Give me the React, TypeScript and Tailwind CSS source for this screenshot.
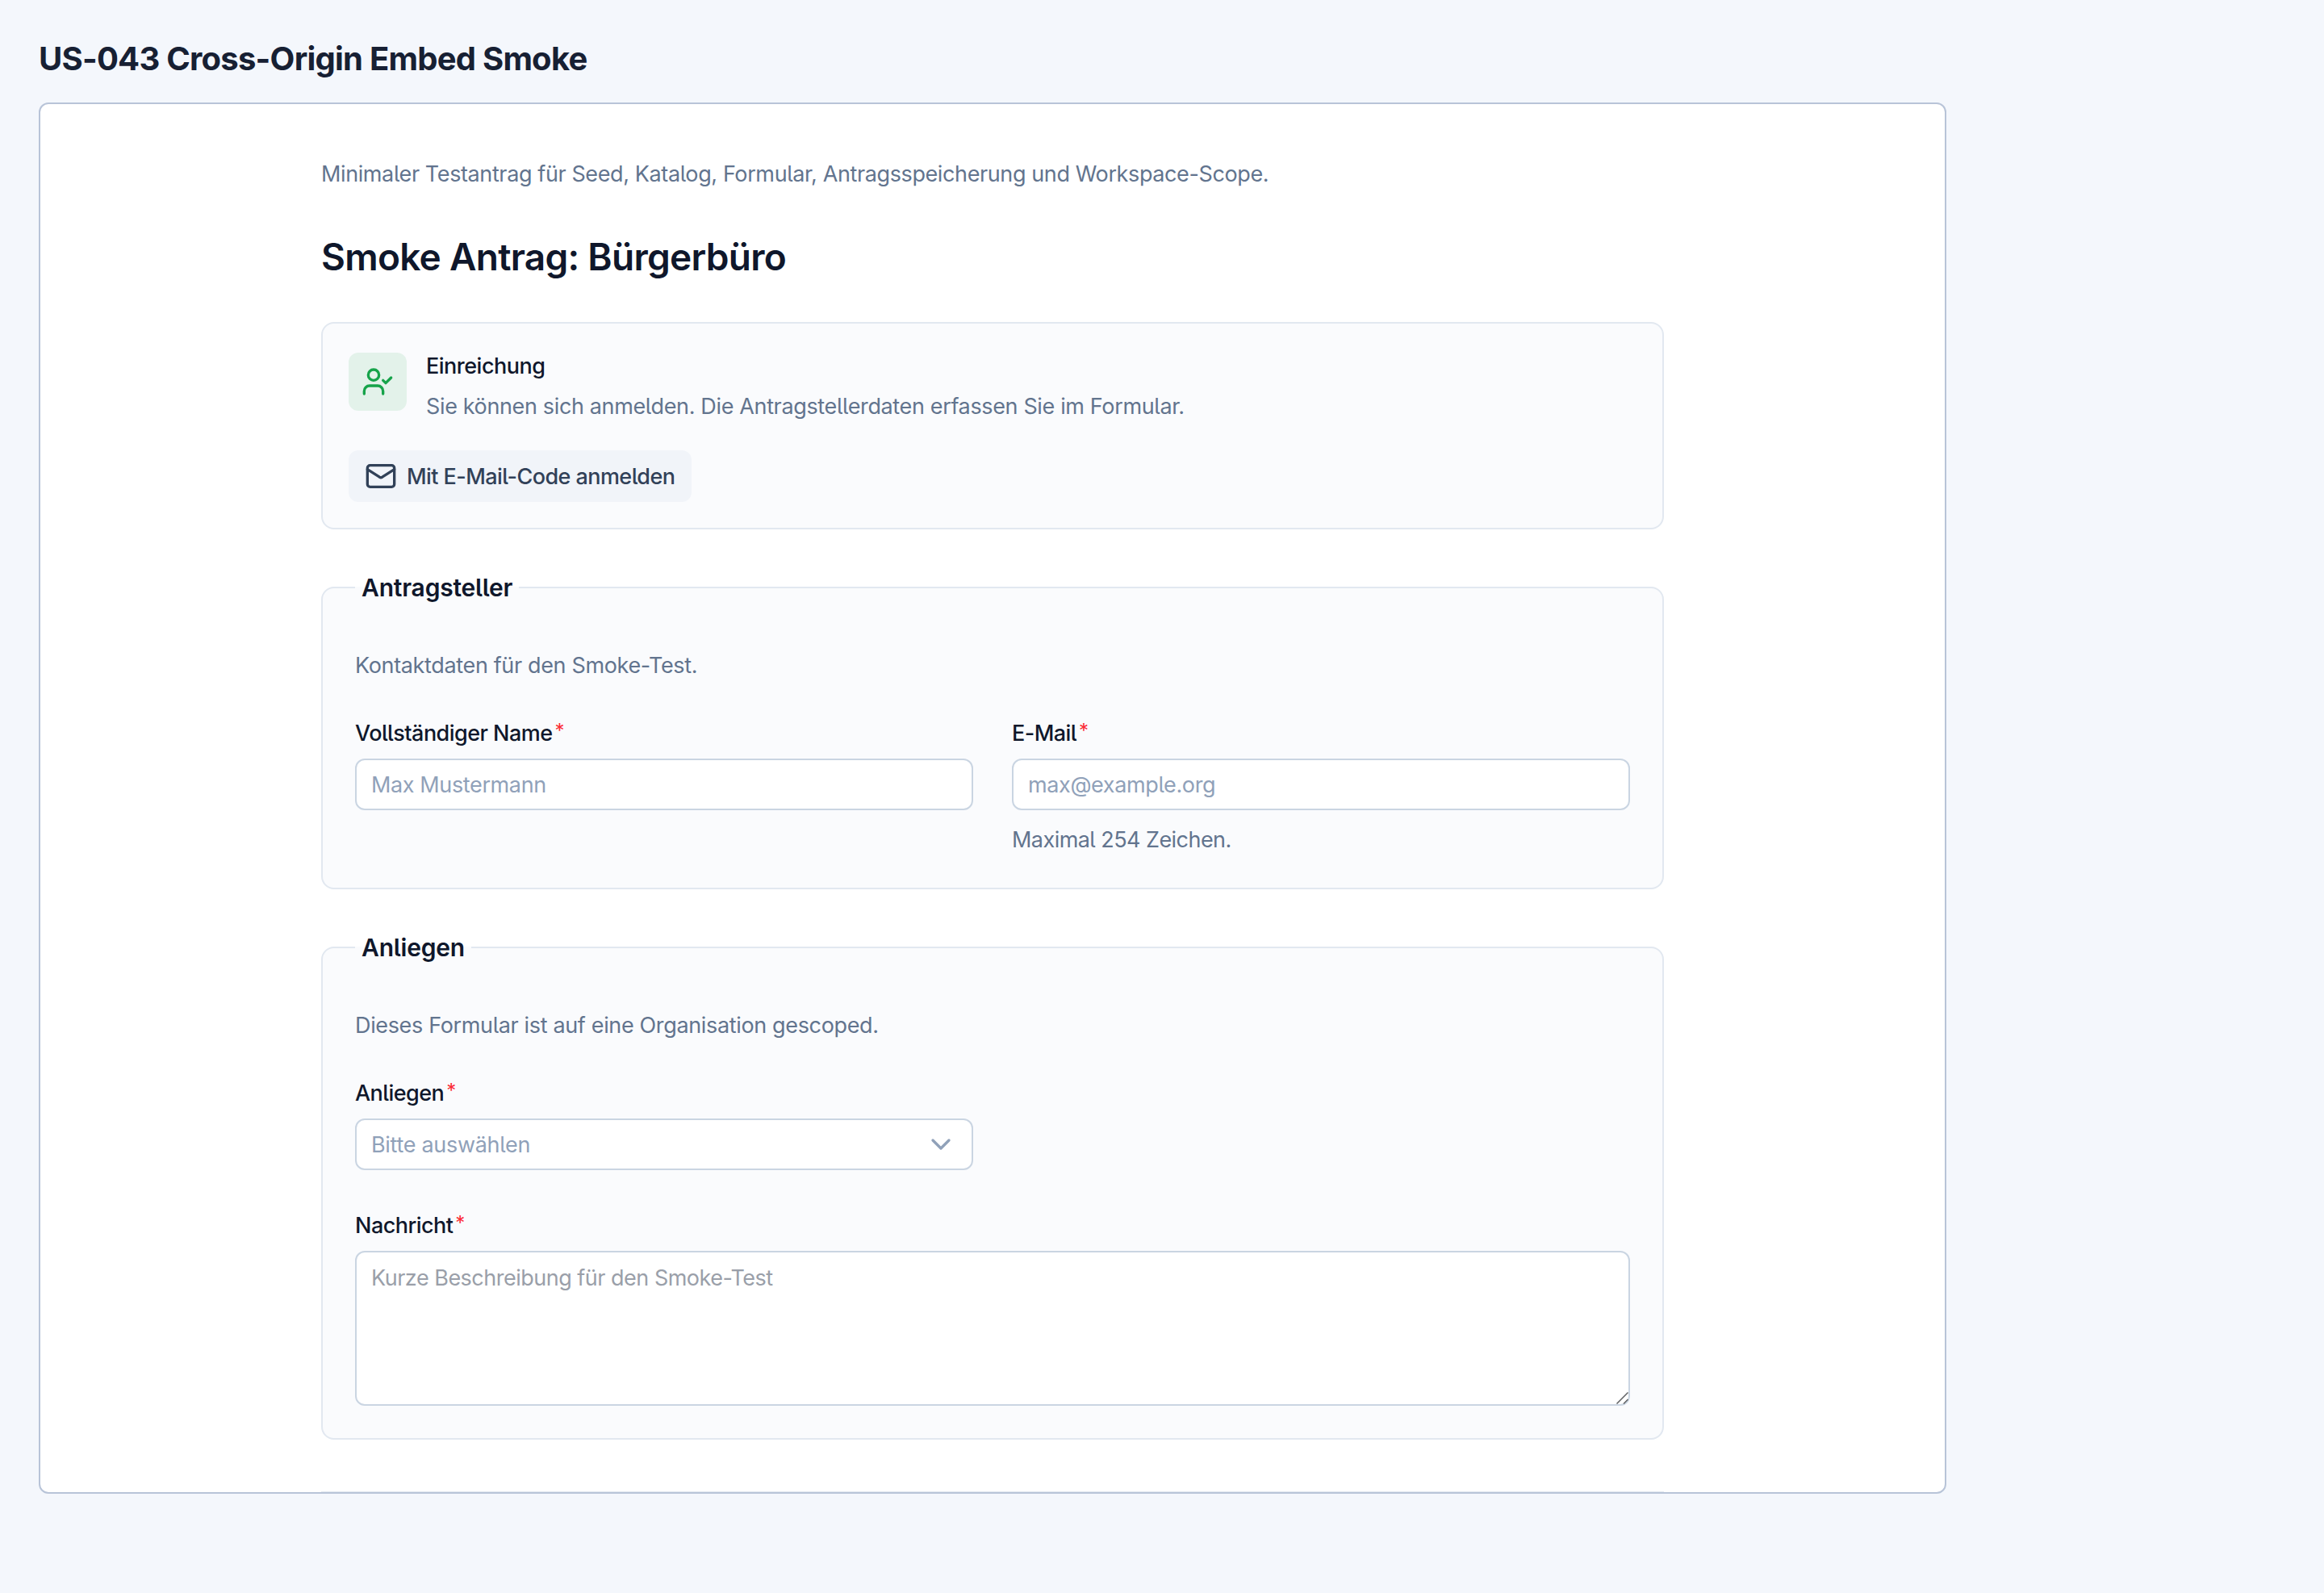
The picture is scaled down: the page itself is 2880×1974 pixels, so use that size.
import clsx from "clsx";
import { ChevronDown, Mail, UserCheck } from "lucide-react";
import { ReactNode } from "react";

interface FieldProps {
    label: string;
    hint?: string;
    children: ReactNode;
}

const controlClass =
    "block w-full rounded-xl border-2 border-[#cad5e2] bg-white px-[18px] text-[27px] leading-[40px]";

function Field({ label, hint, children }: FieldProps) {
    return (
        <div>
            <label className="flex h-10 items-center pt-0.5 text-[27px] font-medium tracking-[-0.54px] text-[#0f172b]">
                {label}
                <span className="ml-[3px] pb-1.5 text-[24px] font-normal text-[#fb2c36]">*</span>
            </label>
            <div className="mt-3">{children}</div>
            {hint && <p className="mt-[17px] text-[27px] leading-[40px] tracking-[-0.55px] text-[#62748e]">{hint}</p>}
        </div>
    );
}

interface SectionProps {
    title: string;
    description: string;
    className?: string;
    children: ReactNode;
}

function Section({ title, description, className, children }: SectionProps) {
    return (
        <fieldset className={clsx("mt-12 rounded-2xl border-2 border-[#e2e8f0] bg-[#fafbfd] px-10", className)}>
            <legend className="px-2 text-[30px] leading-[48px] font-semibold tracking-[-0.2px] text-[#0f172b]">
                {title}
            </legend>
            <p className="mt-[51px] text-[27px] leading-[44px] tracking-[-0.35px] text-[#62748e]">{description}</p>
            {children}
        </fieldset>
    );
}

export default function App() {
    return (
        <div className="h-[1974px] w-[2880px] bg-[#f4f7fc] px-12 pt-[49px] font-['Inter',sans-serif]">
            <h1 className="text-[40px] leading-[48px] font-bold tracking-[-0.76px] text-[#172033]">
                US-043 Cross-Origin Embed Smoke
            </h1>

            <main className="mt-[30px] h-[1724px] w-[2364px] overflow-hidden rounded-xl border-2 border-[#b8c4d8] bg-white px-[348px] pt-[65px] [font-feature-settings:'cv05']">
                <p className="text-[27px] leading-[44px] tracking-[-0.39px] text-[#62748e]">
                    Minimaler Testantrag für Seed, Katalog, Formular, Antragsspeicherung und Workspace-Scope.
                </p>
                <h2 className="mt-[50px] text-[46px] leading-[60px] font-semibold tracking-[-0.72px] text-[#0f172b]">
                    Smoke Antrag: Bürgerbüro
                </h2>

                <section className="mt-[51px] h-[257px] rounded-2xl border-2 border-[#e2e8f0] bg-[#fafbfd] px-8 pt-8">
                    <div className="flex gap-6">
                        <div className="mt-1 flex size-[72px] items-center justify-center rounded-xl bg-[#e3f2ea] text-[#16a34a]">
                            <UserCheck size={40} />
                        </div>
                        <div>
                            <h3 className="mt-px text-[27px] leading-[40px] font-medium tracking-[-0.5px] text-[#0f172b]">
                                Einreichung
                            </h3>
                            <p className="mt-2 text-[27px] leading-[44px] tracking-[-0.36px] text-[#62748e]">
                                Sie können sich anmelden. Die Antragstellerdaten erfassen Sie im Formular.
                            </p>
                        </div>
                    </div>
                    <button className="mt-8 flex h-16 w-[425px] items-center gap-3 rounded-xl bg-[#f1f4f9] px-5 text-[27px] font-medium tracking-[-0.57px] whitespace-nowrap text-[#314158]">
                        <Mail size={40} className="shrink-0" />
                        <span className="pt-0.5">Mit E-Mail-Code anmelden</span>
                    </button>
                </section>

                <Section title="Antragsteller" description="Kontaktdaten für den Smoke-Test." className="h-[398px]">
                    <div className="mt-[41px] grid grid-cols-2 gap-12">
                        <Field label="Vollständiger Name">
                            <input
                                className={clsx(controlClass, "h-16 tracking-[-0.38px] placeholder:text-[#90a1b9]")}
                                placeholder="Max Mustermann"
                            />
                        </Field>
                        <Field label="E-Mail" hint="Maximal 254 Zeichen.">
                            <input
                                className={clsx(controlClass, "h-16 tracking-[-0.38px] placeholder:text-[#90a1b9]")}
                                placeholder="max@example.org"
                            />
                        </Field>
                    </div>
                </Section>

                <Section
                    title="Anliegen"
                    description="Dieses Formular ist auf eine Organisation gescoped."
                    className="h-[634px]"
                >
                    <div className="mt-[41px] grid grid-cols-2 gap-12">
                        <Field label="Anliegen">
                            <button
                                className={clsx(
                                    controlClass,
                                    "flex h-16 items-center justify-between tracking-[-0.3px] text-[#90a1b9]",
                                )}
                            >
                                <span className="pt-0.5">Bitte auswählen</span>
                                <ChevronDown size={40} />
                            </button>
                        </Field>
                    </div>
                    <div className="mt-12">
                        <Field label="Nachricht">
                            <div className="relative">
                                <textarea
                                    className={clsx(
                                        controlClass,
                                        "h-48 resize-none py-3 tracking-[-0.5px] placeholder:text-[#9a9fa9]",
                                    )}
                                    placeholder="Kurze Beschreibung für den Smoke-Test"
                                />
                                {/* Resize grip */}
                                <svg
                                    className="absolute right-0.5 bottom-0.5 text-[#5f6063]"
                                    width="16"
                                    height="16"
                                    viewBox="0 0 16 16"
                                    stroke="currentColor"
                                    strokeWidth="1.5"
                                >
                                    <path d="M1.5 15.5 15.5 1.5M10 15.5l5.5-5.5" />
                                </svg>
                            </div>
                        </Field>
                    </div>
                </Section>

                <hr className="mt-16 border-t-2 border-[#e2e8f0]" />
            </main>
        </div>
    );
}
